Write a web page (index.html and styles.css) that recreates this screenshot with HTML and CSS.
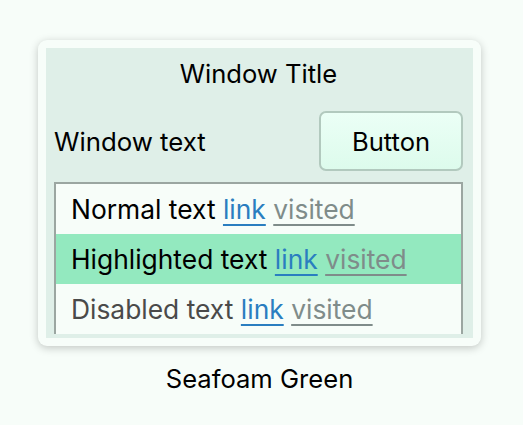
FILE: index.html
```html
<!DOCTYPE html>
<html lang="en">
<head>
    <meta charset="UTF-8">
    <meta name="viewport" content="width=device-width, initial-scale=1.0">
    <title>Seafoam Green</title>
    <link rel="stylesheet" href="styles.css">
</head>
<body>
    <div class="preview">
        <div class="card">
            <div class="window">
                <div class="title">Window Title</div>
                <div class="toolbar">
                    <span class="label">Window text</span>
                    <button class="btn">Button</button>
                </div>
                <div class="list">
                    <div class="row">Normal text <a class="link">link</a> <a class="visited">visited</a></div>
                    <div class="row highlighted">Highlighted text <a class="link">link</a> <a class="visited">visited</a></div>
                    <div class="row disabled">Disabled text <a class="link">link</a> <a class="visited">visited</a></div>
                </div>
            </div>
        </div>
        <div class="caption">Seafoam Green</div>
    </div>
</body>
</html>
```
FILE: styles.css
```css
* { margin: 0; padding: 0; box-sizing: border-box; }
body {
    font-family: Inter, "Noto Sans", sans-serif;
    background: #f7fdf9;
    color: #000;
}
.preview {
    padding: 40px 0 0 38px;
    width: 481px;
}
.card {
    background: #f7fdf9;
    border-radius: 9px;
    padding: 8px;
    height: 306px;
    box-shadow: 0 2px 8px rgba(0,0,0,0.22);
}
.window {
    background: #dfefe8;
    height: 290px;
    padding: 0 10px 0 8px;
    overflow: hidden;
}
.title {
    height: 52px;
    line-height: 52px;
    text-align: center;
    font-size: 25.6px;
}
.toolbar {
    display: flex;
    align-items: center;
    justify-content: space-between;
    margin-top: 11px;
}
.label { font-size: 25.8px; }
.btn {
    width: 144px;
    height: 60px;
    border: 2px solid #b2c9be;
    border-radius: 7px;
    background: linear-gradient(#ebfff6, #ddfbec);
    font-family: inherit;
    font-size: 25.6px;
    color: #000;
}
.list {
    margin-top: 11px;
    height: 152px;
    background: #f7fdf9;
    border: 2px solid #9ba6a1;
    border-bottom: none;
    overflow: hidden;
}
.row {
    height: 50px;
    line-height: 50px;
    padding-left: 15px;
    font-size: 26.4px;
}
.highlighted { background: #93e9bf; }
.disabled { color: #4a4a4a; }
.link, .visited {
    text-decoration: underline;
    text-decoration-thickness: 2px;
    text-underline-offset: 5px;
}
.link { color: #2a7ec0; }
.visited { color: #7f8c8a; }
.caption {
    text-align: center;
    font-size: 25.6px;
    margin-top: 17px;
}
```
